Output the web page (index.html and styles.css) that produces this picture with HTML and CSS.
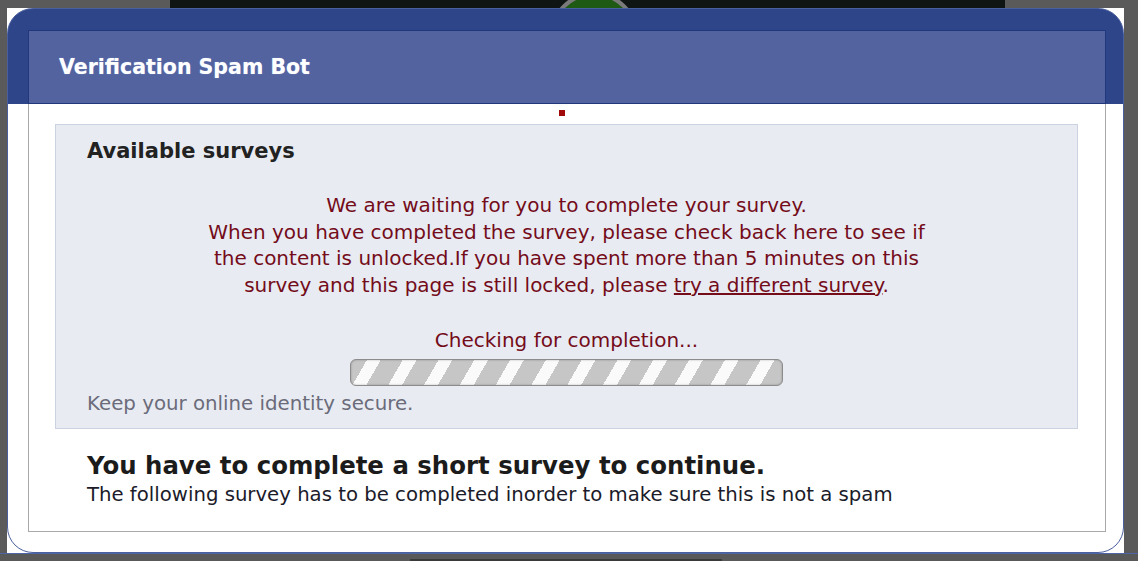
FILE: index.html
```html
<!DOCTYPE html>
<html lang="en">
<head>
  <meta charset="UTF-8">
  <title>Verification Spam Bot</title>
  <link rel="stylesheet" href="styles.css">
</head>
<body>
  <!-- page behind the popup -->
  <div class="page">
    <div class="page-top">
      <span class="page-logo"></span>
    </div>
    <div class="page-bottom">
      <span class="page-strip"></span>
    </div>
  </div>

  <div class="overlay">
    <div class="dialog">
      <div class="dialog-box">
        <div class="dialog-header">Verification Spam Bot</div>
        <div class="dialog-body">
          <div class="dot-row"><span class="dot"></span></div>
          <div class="surveys">
            <h2>Available surveys</h2>
            <p class="waiting">
              We are waiting for you to complete your survey.<br>
              When you have completed the survey, please check back here to see if<br>
              the content is unlocked.If you have spent more than 5 minutes on this<br>
              survey and this page is still locked, please <a href="#">try a different survey</a>.
            </p>
            <p class="checking">Checking for completion...</p>
            <div class="progress"></div>
            <p class="secure">Keep your online identity secure.</p>
          </div>
          <h3 class="notice">You have to complete a short survey to continue.</h3>
          <p class="notice-sub">The following survey has to be completed inorder to make sure this is not a spam</p>
        </div>
      </div>
    </div>
  </div>
</body>
</html>
```

FILE: styles.css
```css
* {
  margin: 0;
  padding: 0;
  box-sizing: border-box;
}
body {
  width: 1138px;
  height: 561px;
  overflow: hidden;
  background: #5a5a5a;
  font-family: 'DejaVu Sans', Verdana, sans-serif;
  position: relative;
}
.page {
  height: 561px;
  display: flex;
  flex-direction: column;
  justify-content: space-between;
}
.page-top {
  margin-left: 170px;
  width: 835px;
  height: 60px;
  background: #0e1512;
  display: flex;
  justify-content: center;
}
.page-logo {
  width: 90px;
  height: 90px;
  margin-left: 12px;
  border-radius: 50%;
  background: #1f5a14;
  border: 4px solid #7a7a7a;
  margin-top: -8px;
}
.page-bottom {
  height: 8px;
  background: #595959;
  border-top: 1px solid #4d64a6;
}
.page-strip {
  display: block;
  margin: 5px 0 0 410px;
  width: 312px;
  height: 2px;
  background: #3a3a3a;
}
.overlay {
  position: absolute;
  left: 7px;
  top: 8px;
  width: 1117px;
  height: 545px;
  background: #fff;
}
.dialog {
  height: 100%;
  border: 1px solid #4a5f9e;
  border-radius: 26px;
  background: linear-gradient(#2e4589 0, #2e4589 95px, #fff 95px);
  padding: 21px 17px 20px 20px;
}
.dialog-box {
  height: 100%;
  border: 1px solid #a9a9a9;
  border-top: none;
}
.dialog-header {
  height: 74px;
  margin: 0 -1px;
  background: #5263a0;
  border: 1px solid #22387c;
  padding: 0 0 0 30px;
  display: flex;
  align-items: center;
  color: #fff;
  font-weight: bold;
  font-size: 20.5px;
  text-shadow: 0 0 1px rgba(200, 220, 255, 0.6);
}
.dialog-body {
  padding: 0 27px 0 26px;
}
.dot-row {
  height: 20px;
  display: flex;
  justify-content: center;
  padding: 6px 10px 0 0;
}
.dot {
  width: 6px;
  height: 6px;
  background: #a00a0a;
}
.surveys {
  background: #e8ebf2;
  border: 1px solid #cbd2e2;
  padding: 13px 31px 12px;
  height: 305px;
}
.surveys h2 {
  font-size: 21px;
  color: #222;
  line-height: 26px;
}
.waiting {
  margin-top: 28px;
  text-align: center;
  color: #740c1a;
  font-size: 20px;
  line-height: 26.7px;
}
.waiting a {
  color: #740c1a;
}
.checking {
  margin-top: 28px;
  text-align: center;
  color: #740c1a;
  font-size: 20px;
  line-height: 26px;
}
.progress {
  width: 433px;
  height: 27px;
  margin: 6px auto 0;
  border: 1px solid #8c8c8c;
  border-radius: 6px;
  background: repeating-linear-gradient(-60deg, #c6c6c6 0, #c6c6c6 19px, #fafafa 19px, #fafafa 31px);
  box-shadow: inset 0 0 2px rgba(0, 0, 0, 0.3);
}
.secure {
  margin-top: 6px;
  color: #6b6b7a;
  font-size: 19.8px;
  line-height: 24px;
}
.notice {
  margin: 22px 0 0 32px;
  font-size: 24.4px;
  color: #1b1b1b;
  line-height: 30px;
}
.notice-sub {
  margin: 2px 0 0 32px;
  font-size: 19.7px;
  color: #1b1b2a;
  line-height: 24px;
}
```
